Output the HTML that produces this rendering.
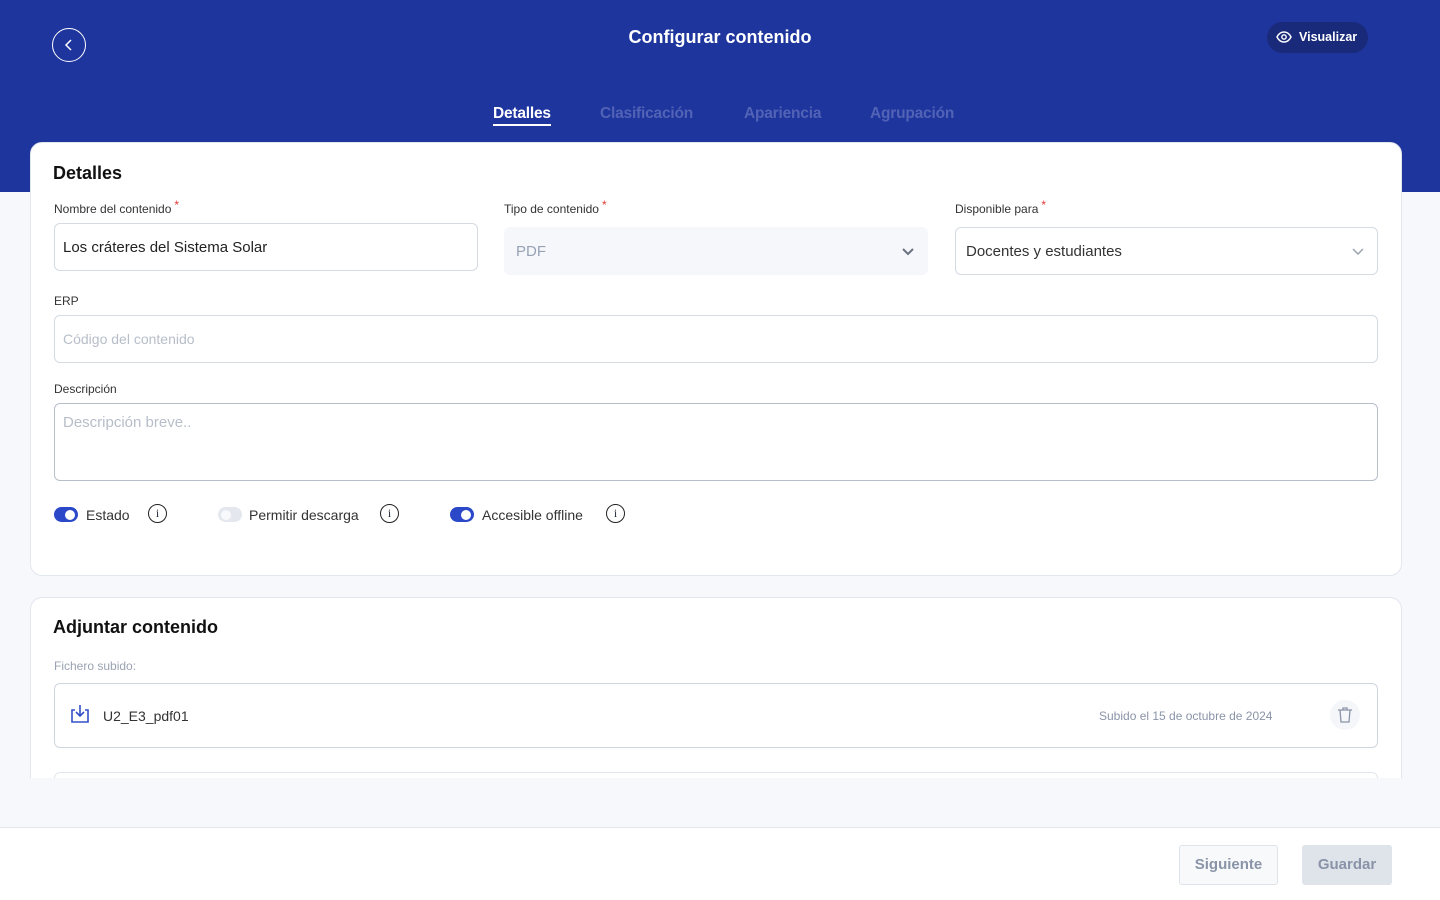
<!DOCTYPE html>
<html><head><meta charset="utf-8"><style>
*{box-sizing:border-box;margin:0;padding:0}
body{width:1440px;height:900px;overflow:hidden;background:#f6f8fb;font-family:"Liberation Sans",sans-serif;color:#1f2937;position:relative}
.hdr{position:absolute;left:0;top:0;width:1440px;height:192px;background:#1e359e}
.back{position:absolute;left:52px;top:28px;width:34px;height:34px;border:1.5px solid #fff;border-radius:50%}
.title{position:absolute;left:0;width:1440px;top:27px;text-align:center;color:#fff;font-weight:bold;font-size:18px}
.vis{position:absolute;left:1267px;top:22px;width:101px;height:31px;border-radius:16px;background:#192a7a;color:#fff;font-size:12.5px;font-weight:bold;padding:8px 0 0 32px}
.tabs{position:absolute;top:105px;font-size:15.5px;font-weight:bold;letter-spacing:-0.2px}
.tab{position:absolute;white-space:nowrap;color:#5263b5}
.card{position:absolute;left:30px;width:1372px;background:#fff;border:1px solid #e2e6ee;border-radius:12px}
h2{position:absolute;left:23px;font-size:18px;font-weight:bold;color:#111}
.lbl{position:absolute;font-size:12px;color:#333}
.lbl b{color:#e53935;font-weight:normal;position:relative;top:-4px;margin-left:3px}
.inp{position:absolute;border:1px solid #d5dae3;border-radius:6px;font-size:15px;padding-left:8px;background:#fff}
.ph{color:#b7bec9}
.tg{position:absolute;top:507px;width:24px;height:15px;border-radius:8px;background:#2a48c8}
.tg i{position:absolute;right:3px;top:2.5px;width:10px;height:10px;border-radius:50%;background:#fff}
.tt{position:absolute;top:507px;font-size:14px;color:#333}
.info{position:absolute;top:504px;width:19px;height:19px;border:1.3px solid #222;border-radius:50%;text-align:center;font-size:12px;line-height:16px;font-family:"Liberation Serif",serif}
.foot{position:absolute;left:0;top:827px;width:1440px;height:73px;background:#fff;border-top:1px solid #e2e6ee}
.btn{position:absolute;top:17px;height:40px;border-radius:3px;font-size:15px;font-weight:bold;color:#8a94a8;text-align:center;line-height:40px}
</style></head><body>
<div class="hdr"></div>
<div class="back"><svg width="32" height="32" viewBox="0 0 32 32" style="position:absolute;left:-0.5px;top:-0.5px"><path d="M18 11l-5 5 5 5" fill="none" stroke="#fff" stroke-width="1.5"/></svg></div>
<div class="title">Configurar contenido</div>
<div class="vis"><svg width="16" height="12" viewBox="0 0 16 12" style="position:absolute;left:9px;top:9px"><path d="M1 6C3 2 5.5 1 8 1s5 1 7 5c-2 4-4.5 5-7 5S3 10 1 6z" fill="none" stroke="#fff" stroke-width="1.4"/><circle cx="8" cy="6" r="2.2" fill="none" stroke="#fff" stroke-width="1.4"/></svg>Visualizar</div>
<div class="tabs">
<span class="tab" style="left:493px;color:#fff">Detalles<span style="position:absolute;left:0;right:0;top:19px;height:2px;background:#fff"></span></span>
<span class="tab" style="left:600px">Clasificación</span>
<span class="tab" style="left:744px">Apariencia</span>
<span class="tab" style="left:870px">Agrupación</span>
</div>
<div class="card" style="top:142px;height:434px"></div>
<h2 style="top:163px;left:53px">Detalles</h2>
<div class="lbl" style="left:54px;top:202px">Nombre del contenido<b>*</b></div>
<div class="lbl" style="left:504px;top:202px">Tipo de contenido<b>*</b></div>
<div class="lbl" style="left:955px;top:202px">Disponible para<b>*</b></div>
<div class="inp" style="left:54px;top:223px;width:424px;height:48px;line-height:48px;color:#222">Los cráteres del Sistema Solar</div>
<div class="inp" style="left:504px;top:227px;width:424px;height:48px;line-height:48px;background:#f5f7fb;border-color:#f5f7fb;color:#98a2b5;padding-left:11px">PDF<svg width="12" height="8" style="position:absolute;right:13px;top:20px"><path d="M1 1l5 5 5-5" fill="none" stroke="#6b7280" stroke-width="2"/></svg></div>
<div class="inp" style="left:955px;top:227px;width:423px;height:48px;line-height:48px;color:#333;padding-left:10px">Docentes y estudiantes<svg width="12" height="8" style="position:absolute;right:13px;top:20px"><path d="M1 1l5 5 5-5" fill="none" stroke="#9ca3af" stroke-width="1.5"/></svg></div>
<div class="lbl" style="left:54px;top:294px">ERP</div>
<div class="inp ph" style="left:54px;top:315px;width:1324px;height:48px;line-height:47px;font-size:14px">Código del contenido</div>
<div class="lbl" style="left:54px;top:382px">Descripción</div>
<div class="inp ph" style="left:54px;top:403px;width:1324px;height:78px;padding-top:10px;border-color:#b8bec9">Descripción breve..</div>
<div class="tg" style="left:54px"><i></i></div><div class="tt" style="left:86px">Estado</div><div class="info" style="left:148px">i</div>
<div class="tg" style="left:218px;background:#e4e8ee"><i style="left:3px;right:auto;background:#f8f9fb"></i></div><div class="tt" style="left:249px">Permitir descarga</div><div class="info" style="left:380px">i</div>
<div class="tg" style="left:450px"><i></i></div><div class="tt" style="left:482px">Accesible offline</div><div class="info" style="left:606px">i</div>
<div class="card" style="top:597px;height:181px;border-bottom:none;border-radius:12px 12px 0 0"></div>
<h2 style="top:617px;left:53px">Adjuntar contenido</h2>
<div class="lbl" style="left:54px;top:659px;color:#9aa3b2">Fichero subido:</div>
<div class="inp" style="left:54px;top:683px;width:1324px;height:65px;border-color:#cfd5df"></div>
<svg width="22" height="20" viewBox="0 0 22 20" style="position:absolute;left:69px;top:704px"><path d="M6 6H3v12h16V6h-3M11 1v11M7 8l4 4 4-4" fill="none" stroke="#3450c8" stroke-width="1.6"/></svg>
<div style="position:absolute;left:103px;top:708px;font-size:14px;color:#333">U2_E3_pdf01</div>
<div style="position:absolute;left:1099px;top:709px;font-size:12px;color:#8a94a8">Subido el 15 de octubre de 2024</div>
<div style="position:absolute;left:1330px;top:700px;width:30px;height:30px;border-radius:50%;background:#f4f6f9"><svg width="16" height="18" viewBox="0 0 16 18" style="position:absolute;left:7px;top:6px"><path d="M1 4h14M6 4V2h4v2M3 4l1 12h8l1-12" fill="none" stroke="#8a94a8" stroke-width="1.3"/></svg></div>
<div style="position:absolute;left:54px;top:772px;width:1324px;height:6px;border:1px solid #e2e6ee;border-bottom:none;border-radius:6px 6px 0 0"></div>
<div style="position:absolute;left:0;top:778px;width:1440px;height:49px;background:#f6f8fb"></div>
<div class="foot">
<div class="btn" style="left:1179px;width:99px;border:1px solid #dfe3ea;background:#f7f9fb;line-height:38px">Siguiente</div>
<div class="btn" style="left:1302px;width:90px;background:#dfe3ea">Guardar</div>
</div>
</body></html>
